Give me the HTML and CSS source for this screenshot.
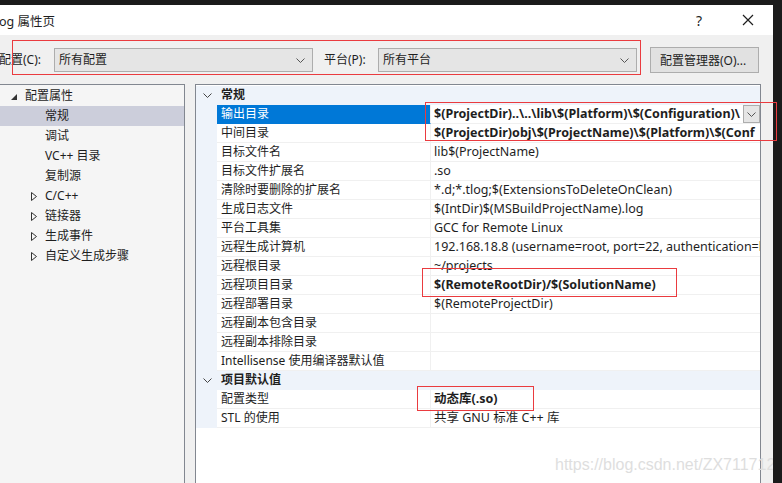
FILE: index.html
```html
<!DOCTYPE html>
<html lang="zh-CN">
<head>
    <meta charset="UTF-8">
    <title>og 属性页</title>
    <link rel="stylesheet" href="styles.css">
</head>
<body>
    <div class="window">
        <!-- barra de título -->
        <div class="titlebar">
            <span class="title">og 属性页</span>
            <span class="tb-help">?</span>
            <span class="tb-close">
                <svg width="12" height="12" viewBox="0 0 12 12"><path d="M1 1L11 11M11 1L1 11" stroke="#1e1e1e" stroke-width="1.2" fill="none"/></svg>
            </span>
        </div>

        <div class="client">
            <!-- configuración / plataforma -->
            <div class="config-row">
                <span class="config-label">配置(C):</span>
                <div class="combo">
                    <span>所有配置</span>
                    <svg class="chev" width="9" height="5" viewBox="0 0 9 5"><path d="M0.5 0.5L4.5 4.5L8.5 0.5" stroke="#555" fill="none"/></svg>
                </div>
                <span class="config-label">平台(P):</span>
                <div class="combo">
                    <span>所有平台</span>
                    <svg class="chev" width="9" height="5" viewBox="0 0 9 5"><path d="M0.5 0.5L4.5 4.5L8.5 0.5" stroke="#555" fill="none"/></svg>
                </div>
                <button class="manager">配置管理器(O)...</button>
            </div>

            <div class="panels">
                <!-- árbol de la izquierda -->
                <div class="tree">
                    <div class="tree-item root">
                        <svg class="arrow" width="6" height="6" viewBox="0 0 6 6"><polygon points="6,0 6,6 0,6" fill="#333"/></svg>
                        配置属性
                    </div>
                    <div class="tree-item child selected">常规</div>
                    <div class="tree-item child">调试</div>
                    <div class="tree-item child">VC++ 目录</div>
                    <div class="tree-item child">复制源</div>
                    <div class="tree-item child"><svg class="expander" width="6" height="9" viewBox="0 0 6 9"><polygon points="0.5,0.5 5.5,4.5 0.5,8.5" fill="none" stroke="#333"/></svg>C/C++</div>
                    <div class="tree-item child"><svg class="expander" width="6" height="9" viewBox="0 0 6 9"><polygon points="0.5,0.5 5.5,4.5 0.5,8.5" fill="none" stroke="#333"/></svg>链接器</div>
                    <div class="tree-item child"><svg class="expander" width="6" height="9" viewBox="0 0 6 9"><polygon points="0.5,0.5 5.5,4.5 0.5,8.5" fill="none" stroke="#333"/></svg>生成事件</div>
                    <div class="tree-item child"><svg class="expander" width="6" height="9" viewBox="0 0 6 9"><polygon points="0.5,0.5 5.5,4.5 0.5,8.5" fill="none" stroke="#333"/></svg>自定义生成步骤</div>
                </div>

                <!-- cuadrícula de propiedades -->
                <div class="grid">
                    <div class="row category">
                        <div class="gutter"><svg width="9" height="5" viewBox="0 0 9 5"><path d="M0.5 0.5L4.5 4.5L8.5 0.5" stroke="#444" fill="none"/></svg></div>
                        <div class="cat-name">常规</div>
                    </div>
                    <div class="row">
                        <div class="gutter"></div>
                        <div class="name selected">输出目录</div>
                        <div class="value bold">
                            <span class="clip">$(ProjectDir)..\..\lib\$(Platform)\$(Configuration)\</span>
                            <span class="drop"><svg width="9" height="5" viewBox="0 0 9 5"><path d="M0.5 0.5L4.5 4.5L8.5 0.5" stroke="#555" fill="none"/></svg></span>
                        </div>
                    </div>
                    <div class="row"><div class="gutter"></div><div class="name">中间目录</div><div class="value bold"><span class="clip">$(ProjectDir)obj\$(ProjectName)\$(Platform)\$(Conf</span></div></div>
                    <div class="row"><div class="gutter"></div><div class="name">目标文件名</div><div class="value">lib$(ProjectName)</div></div>
                    <div class="row"><div class="gutter"></div><div class="name">目标文件扩展名</div><div class="value">.so</div></div>
                    <div class="row"><div class="gutter"></div><div class="name">清除时要删除的扩展名</div><div class="value">*.d;*.tlog;$(ExtensionsToDeleteOnClean)</div></div>
                    <div class="row"><div class="gutter"></div><div class="name">生成日志文件</div><div class="value">$(IntDir)$(MSBuildProjectName).log</div></div>
                    <div class="row"><div class="gutter"></div><div class="name">平台工具集</div><div class="value">GCC for Remote Linux</div></div>
                    <div class="row"><div class="gutter"></div><div class="name">远程生成计算机</div><div class="value"><span class="clip">192.168.18.8 (username=root, port=22, authentication=l</span></div></div>
                    <div class="row"><div class="gutter"></div><div class="name">远程根目录</div><div class="value">~/projects</div></div>
                    <div class="row"><div class="gutter"></div><div class="name">远程项目目录</div><div class="value bold">$(RemoteRootDir)/$(SolutionName)</div></div>
                    <div class="row"><div class="gutter"></div><div class="name">远程部署目录</div><div class="value">$(RemoteProjectDir)</div></div>
                    <div class="row"><div class="gutter"></div><div class="name">远程副本包含目录</div><div class="value"></div></div>
                    <div class="row"><div class="gutter"></div><div class="name">远程副本排除目录</div><div class="value"></div></div>
                    <div class="row"><div class="gutter"></div><div class="name">Intellisense 使用编译器默认值</div><div class="value"></div></div>
                    <div class="row category">
                        <div class="gutter"><svg width="9" height="5" viewBox="0 0 9 5"><path d="M0.5 0.5L4.5 4.5L8.5 0.5" stroke="#444" fill="none"/></svg></div>
                        <div class="cat-name">项目默认值</div>
                    </div>
                    <div class="row"><div class="gutter"></div><div class="name">配置类型</div><div class="value bold">动态库(.so)</div></div>
                    <div class="row"><div class="gutter"></div><div class="name">STL 的使用</div><div class="value">共享 GNU 标准 C++ 库</div></div>
                </div>
            </div>
        </div>

        <div class="watermark">https://blog.csdn.net/ZX711712</div>
    </div>

    <!-- marcas rojas de la captura -->
    <div class="mark mark-config"></div>
    <div class="mark mark-output"></div>
    <div class="mark mark-remote"></div>
    <div class="mark mark-type"></div>
</body>
</html>
```

FILE: styles.css
```css
body {
    margin: 0;
    background: #1b1b1b;
    font-family: 'Noto Sans', 'Noto Sans CJK SC', sans-serif;
    font-size: 12px;
    color: #1e1e1e;
    position: relative;
    width: 782px;
    height: 483px;
    overflow: hidden;
}
.window {
    position: relative;
    margin-top: 5px;
    width: 773px;
    height: 478px;
    background: #f0f0f0;
    overflow: hidden;
}
.titlebar {
    height: 30px;
    background: #fff;
    display: flex;
    align-items: center;
}
.title {
    font-size: 12.5px;
    margin-left: -1px;
    flex: 1;
}
.tb-help {
    font-size: 14px;
    width: 14px;
    margin-right: 32px;
}
.tb-close {
    display: flex;
    margin-right: 19px;
}
.config-row {
    display: flex;
    align-items: center;
    padding: 13px 0 12px;
    height: 24px;
}
.config-label {
    width: 54px;
    line-height: 24px;
}
.config-label:first-child {
    margin-left: -1px;
    width: 55px;
}
.combo {
    width: 253px;
    height: 22px;
    border: 1px solid #adadad;
    background: #e5e5e5;
    display: flex;
    align-items: center;
    justify-content: space-between;
    padding: 0 0 0 4px;
    box-sizing: content-box;
    margin-right: 11px;
}
.combo span {
    line-height: 22px;
}
.combo .chev {
    margin-right: 7px;
}
.combo + .config-label + .combo {
    margin-right: 13px;
}
.manager {
    font-family: inherit;
    font-size: 12px;
    color: #1e1e1e;
    width: 109px;
    height: 26px;
    margin-top: -1px;
    border: 1px solid #adadad;
    background: #e1e1e1;
    padding: 0 0 0 9px;
    text-align: left;
    white-space: nowrap;
}
.panels {
    display: flex;
    height: 400px;
}
.tree {
    width: 184px;
    margin-left: -1px;
    border: 1px solid #828790;
    border-bottom: none;
    background: #f5f5f5;
    padding-top: 1px;
}
.tree-item {
    height: 20px;
    line-height: 20px;
    position: relative;
    white-space: nowrap;
}
.tree-item.root {
    padding-left: 25px;
}
.tree-item.root .arrow {
    position: absolute;
    left: 11px;
    top: 8px;
}
.tree-item.child {
    padding-left: 45px;
}
.tree-item.selected {
    background: #cccedb;
}
.expander {
    position: absolute;
    left: 31px;
    top: 6px;
}
.grid {
    margin-left: 10px;
    width: 564px;
    border: 1px solid #828790;
    border-bottom: none;
    background: #fff;
    padding-top: 1px;
}
.row {
    display: flex;
    height: 19px;
}
.gutter {
    width: 21px;
    flex: none;
    background: #eef3fa;
    display: flex;
    align-items: center;
    justify-content: center;
}
.gutter svg {
    margin-left: 1px;
}
.category {
    background: #eef3fa;
}
.cat-name {
    font-weight: bold;
    line-height: 18px;
    padding-left: 4px;
}
.name {
    width: 209px;
    flex: none;
    padding-left: 4px;
    line-height: 18px;
    border-right: 1px solid #f0f0f0;
    border-bottom: 1px solid #f0f0f0;
    white-space: nowrap;
}
.name.selected {
    background: #0078d7;
    color: #fff;
    border-bottom-color: #0078d7;
}
.value {
    flex: 1;
    min-width: 0;
    padding-left: 3px;
    font-size: 12.5px;
    line-height: 18px;
    border-bottom: 1px solid #f0f0f0;
    white-space: nowrap;
    overflow: hidden;
    display: flex;
}
.value.bold {
    font-weight: bold;
}
.clip {
    flex: 1;
    overflow: hidden;
}
.drop {
    width: 15px;
    height: 16px;
    border: 1px solid #adadad;
    background: #e5e5e5;
    display: flex;
    align-items: center;
    justify-content: center;
    flex: none;
}
.watermark {
    position: absolute;
    left: 555px;
    top: 451px;
    font-family: 'Liberation Sans', Arial, sans-serif;
    font-size: 16px;
    color: #dedede;
    white-space: nowrap;
}
.mark {
    position: absolute;
    border: 1.5px solid #ea3b3f;
}
.mark-config {
    left: 12px;
    top: 40px;
    width: 627px;
    height: 33px;
}
.mark-output {
    left: 425px;
    top: 102px;
    width: 350px;
    height: 37px;
}
.mark-remote {
    left: 422px;
    top: 268px;
    width: 253px;
    height: 27px;
}
.mark-type {
    left: 417px;
    top: 386px;
    width: 115px;
    height: 23px;
}
```
